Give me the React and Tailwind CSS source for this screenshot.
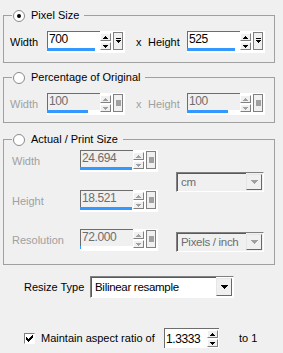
import React from "react";

const FONT = { fontFamily: '"Liberation Sans", Arial, sans-serif' };

function Tri({ up, color = "#000" }) {
  return (
    <svg width="5" height="3" viewBox="0 0 5 3" shapeRendering="crispEdges">
      {up ? (
        <path d="M2 0h1v1h1v1h1v1H0V2h1V1h1z" fill={color} />
      ) : (
        <path d="M0 0h5v1H4v1H3v1H2V2H1V1H0z" fill={color} />
      )}
    </svg>
  );
}

function SmallBtn({ up, disabled, h = "h-[8px]" }) {
  return (
    <div
      className={`${h} w-[11px] flex items-center justify-center bg-[#f0f0f0] border border-t-white border-l-white border-r-[#808080] border-b-[#808080]`}
    >
      <Tri up={up} color={disabled ? "#a0a0a0" : "#000"} />
    </div>
  );
}

function SpinEdit({ value, bar, disabled }) {
  return (
    <div className="flex h-[22px] w-[78px] bg-white items-start">
      <div className="flex flex-col w-[53px]">
        <div
          className={`h-[17px] border-t border-l border-[#6d6d6d] pl-[1px] text-[12px] leading-[15px] tracking-[-0.4px] ${
            disabled ? "text-[#6d6d6d] bg-[#f0f0f0]" : "text-black"
          }`}
        >
          {value}
        </div>
        <div className="h-[3px] bg-[#3399ff]" style={{ width: bar }} />
      </div>
      <div className="mt-[2px] flex flex-col gap-[1px]">
        <SmallBtn up disabled={disabled} />
        <SmallBtn disabled={disabled} />
      </div>
      <div className="mt-[1px] ml-[2px] h-[18px] w-[10px] border border-[#808080] bg-[#f0f0f0] flex items-center justify-center">
        {disabled ? (
          <div className="w-[5px] h-[6px] bg-[#a0a0a0]" />
        ) : (
          <svg width="5" height="6" viewBox="0 0 5 6" shapeRendering="crispEdges">
            <path d="M0 0h5v1H0z M0 2h5v1H4v1H3v1H2V4H1V3H0z" fill="#000" />
          </svg>
        )}
      </div>
    </div>
  );
}

function Radio({ checked }) {
  return (
    <div className="w-[12px] h-[12px] rounded-full border border-[#8a8a8a] bg-white flex items-center justify-center">
      {checked && <div className="w-[4px] h-[4px] rounded-full bg-black" />}
    </div>
  );
}

function Legend({ checked, children }) {
  return (
    <legend className="ml-[8px] h-[15px] pl-[1px] pr-[5px]">
      <div className="flex items-center h-[15px] gap-[6px]">
        <Radio checked={checked} />
        <span className="text-[11px] text-black leading-[15px]">{children}</span>
      </div>
    </legend>
  );
}

function Combo({ text, disabled, w = "w-[88px]", h = "h-[20px]" }) {
  return (
    <div
      className={`${w} ${h} flex items-stretch border border-t-[#808080] border-l-[#808080] border-r-white border-b-white ${
        disabled ? "bg-[#f0f0f0]" : "bg-white"
      }`}
    >
      <div
        className={`flex-1 flex items-center whitespace-nowrap overflow-hidden border-t border-l border-[#5a5a5a] pl-[3px] text-[11.5px] tracking-[-0.3px] ${
          disabled ? "text-[#6d6d6d]" : "text-black"
        }`}
      >
        {text}
      </div>
      <div className="w-[16px] flex items-center justify-center border border-t-[#e6e6e6] border-l-[#e6e6e6] border-r-[#696969] border-b-[#696969] bg-[#f0f0f0] my-[1px] mr-[1px]">
        <svg width="7" height="4" viewBox="0 0 7 4" shapeRendering="crispEdges">
          <path d="M0 0h7v1H6v1H5v1H4v1H3V3H2V2H1V1H0z" fill={disabled ? "#a0a0a0" : "#000"} />
        </svg>
      </div>
    </div>
  );
}

export default function App() {
  const grey = "text-[#a0a0a0]";
  return (
    <div className="w-[283px] h-[353px] bg-[#f0f0f0] overflow-hidden text-[11px]" style={FONT}>
      {/* Group 1 */}
      <fieldset className="mt-[8px] ml-[3px] w-[272px] border border-[#a0a0a0] pt-[8px] pb-[9px]">
        <Legend checked>Pixel Size</Legend>
        <div className="flex items-center h-[22px] pl-[6px]">
          <span className="w-[37px] text-black">Width</span>
          <SpinEdit value="700" bar={48} />
          <span className="ml-[11px] w-[12px] text-black">x</span>
          <span className="w-[39px] text-black">Height</span>
          <SpinEdit value="525" bar={48} />
        </div>
      </fieldset>

      {/* Group 2 */}
      <fieldset className="mt-[7px] ml-[3px] w-[272px] border border-[#a0a0a0] pt-[8px] pb-[7px]">
        <Legend>Percentage of Original</Legend>
        <div className="flex items-center h-[22px] pl-[6px]">
          <span className={`w-[37px] ${grey}`}>Width</span>
          <SpinEdit value="100" bar={41} disabled />
          <span className={`ml-[11px] w-[12px] ${grey}`}>x</span>
          <span className={`w-[39px] ${grey}`}>Height</span>
          <SpinEdit value="100" bar={41} disabled />
        </div>
      </fieldset>

      {/* Group 3 */}
      <fieldset className="mt-[9px] ml-[3px] w-[272px] border border-[#a0a0a0] pt-[3px] pb-[12px]">
        <Legend>Actual / Print Size</Legend>
        <div className="flex items-start pl-[8px]">
          <div className="flex flex-col">
            <div className="flex items-center h-[22px]">
              <span className={`w-[68px] ${grey}`}>Width</span>
              <SpinEdit value="24.694" bar={52} disabled />
            </div>
            <div className="flex items-center h-[22px] mt-[18px]">
              <span className={`w-[68px] ${grey}`}>Height</span>
              <SpinEdit value="18.521" bar={52} disabled />
            </div>
            <div className="flex items-center h-[22px] mt-[17px]">
              <span className={`w-[68px] ${grey}`}>Resolution</span>
              <SpinEdit value="72.000" bar={1} disabled />
            </div>
          </div>
          <div className="ml-[18px] pt-[22px] flex flex-col gap-[40px]">
            <Combo text="cm" disabled />
            <Combo text="Pixels / inch" disabled />
          </div>
        </div>
      </fieldset>

      {/* Resize type */}
      <div className="mt-[11px] flex items-center h-[22px] pl-[24px]">
        <span className="w-[66px] text-black">Resize Type</span>
        <Combo text="Bilinear resample" w="w-[144px]" h="h-[22px]" />
      </div>

      {/* Aspect ratio */}
      <div className="mt-[30px] flex items-center h-[20px] pl-[24px]">
        <div className="w-[11px] h-[11px] border border-t-[#808080] border-l-[#808080] border-r-white border-b-white bg-white flex items-center justify-center">
          <svg width="7" height="7" viewBox="0 0 7 7" shapeRendering="crispEdges">
            <path d="M0 2h1v1h1v1h1V3h1V2h1V1h1V0h1v3H6v1H5v1H4v1H3v1H2V6H1V5H0z" fill="#000" />
          </svg>
        </div>
        <span className="ml-[6px] w-[123px] text-black">Maintain aspect ratio of</span>
        <div className="w-[55px] h-[20px] flex items-center bg-white border-t border-l border-[#6d6d6d]">
          <span className="flex-1 pl-[1px] text-[12px] tracking-[-0.4px] text-black">1.3333</span>
          <div className="flex flex-col gap-[1px] mr-[1px]">
            <SmallBtn up h="h-[8px]" />
            <SmallBtn h="h-[8px]" />
          </div>
        </div>
        <span className="ml-[20px] text-black">to 1</span>
      </div>
    </div>
  );
}
